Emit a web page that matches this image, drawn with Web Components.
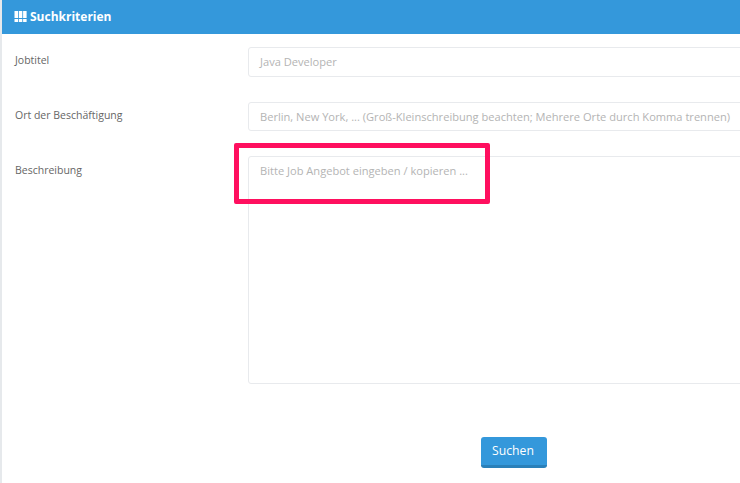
<!DOCTYPE html>
<html><head><meta charset="utf-8">
<style>
html,body{margin:0;padding:0;height:100%;overflow:hidden;background:#fff}
body{font-family:"Open Sans","Liberation Sans",sans-serif}
</style></head><body>
<search-panel title-text="Suchkriterien">
  <form-row label="Jobtitel"><text-box placeholder="Java Developer"></text-box></form-row>
  <form-row label="Ort der Beschäftigung" style="margin-top:25px"><text-box placeholder="Berlin, New York, ... (Groß-Kleinschreibung beachten; Mehrere Orte durch Komma trennen)"></text-box></form-row>
  <form-row label="Beschreibung" style="margin-top:25px;--label-top:6px"><text-box multi placeholder="Bitte Job Angebot eingeben / kopieren ..."></text-box></form-row>
  <search-button>Suchen</search-button>
</search-panel>
<mark-box></mark-box>
<script>
function def(name, html, init){
  customElements.define(name, class extends HTMLElement{
    connectedCallback(){
      if(this.shadowRoot) return;
      const r=this.attachShadow({mode:"open"});
      r.innerHTML=html;
      if(init) init(this,r);
    }
  });
}
def("search-panel",`<style>
:host{display:block;width:740px;height:483px;box-sizing:border-box;border-left:2px solid #e6e9ec;overflow:hidden;background:#fff}
.head{height:34px;background:#3498db;display:flex;align-items:center;gap:3px;padding-left:12px;padding-bottom:2px;box-sizing:border-box;color:#fff;font-size:12px;font-weight:700}
svg{display:block}
.body{padding-top:13px}
</style>
<div class="head"><svg width="13" height="11" viewBox="0 0 13 11" fill="#fff"><rect x="0.5" y="0" width="3.5" height="7"/><rect x="4.8" y="0" width="3.5" height="7"/><rect x="9.1" y="0" width="3.5" height="7"/><rect x="0.5" y="8" width="3.5" height="3"/><rect x="4.8" y="8" width="3.5" height="3"/><rect x="9.1" y="8" width="3.5" height="3"/></svg><span id="t"></span></div>
<div class="body"><slot></slot></div>`,(h,r)=>{r.getElementById("t").textContent=h.getAttribute("title-text")});
def("form-row",`<style>
:host{display:flex;align-items:flex-start}
.l{width:246px;flex:none;padding-left:13px;padding-top:var(--label-top,5px);box-sizing:border-box;font-size:10.5px;line-height:16px;color:#666}
.c{flex:1;min-width:0}
</style><div class="l" id="l"></div><div class="c"><slot></slot></div>`,(h,r)=>{r.getElementById("l").textContent=h.getAttribute("label")});
def("text-box",`<style>
:host{display:block;width:520px;box-sizing:border-box;border:1px solid #e8eaed;border-radius:3px;background:#fff;height:29.5px;padding:0 11px;font-size:11.1px;line-height:27px;color:#b4b4b4;white-space:nowrap;overflow:hidden}
:host([multi]){height:228px}
</style><span id="p"></span>`,(h,r)=>{r.getElementById("p").textContent=h.getAttribute("placeholder")});
def("search-button",`<style>
:host{display:block;width:66px;height:31px;box-sizing:border-box;margin:53px 0 0 479px;background:#3498db;border-bottom:3px solid #2a80b9;border-radius:3px;color:#fff;font-size:12.2px;line-height:27px;text-align:center;padding-right:2px}
</style><slot></slot>`);
def("mark-box",`<style>
:host{position:absolute;left:234px;top:143px;width:255.5px;height:60.5px;box-sizing:border-box;border:5px solid #ff0f5f;border-radius:2px}
</style>`);
</script>
</body></html>
